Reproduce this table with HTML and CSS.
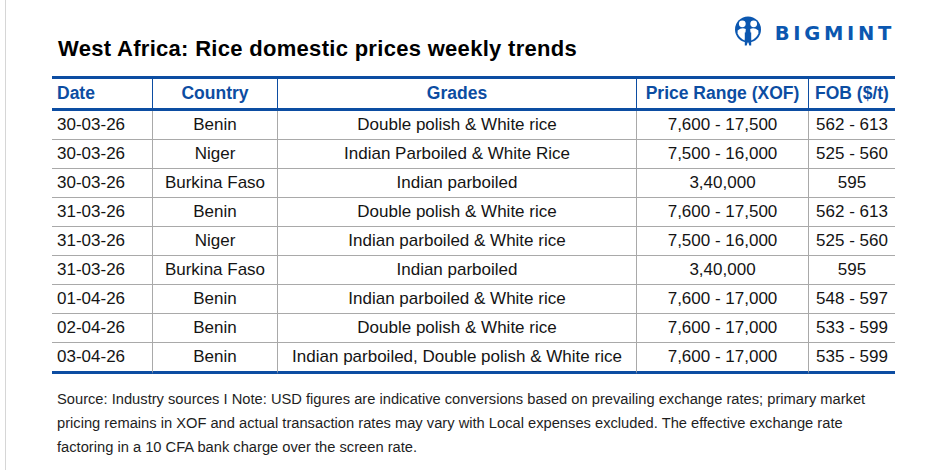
FILE: index.html
```html
<!DOCTYPE html>
<html lang="en">
<head>
<meta charset="utf-8">
<title>West Africa: Rice domestic prices weekly trends</title>
<link rel="stylesheet" href="styles.css">
</head>
<body>
<div class="page">
  <div class="top">
    <h1 class="title">West Africa: Rice domestic prices weekly trends</h1>
    <div class="logo">
      <svg class="logo-icon" width="26" height="30" viewBox="0 0 26 30" aria-hidden="true">
        <circle cx="13" cy="13.5" r="13" fill="#0b57b0"/>
        <circle cx="7.3" cy="7.8" r="3.4" fill="#fff"/>
        <circle cx="18.7" cy="7.8" r="3.4" fill="#fff"/>
        <path d="M2.6 14.5 Q6.8 11 10.8 13 L9.8 24.5 Q4.6 22 2.6 17.5 Z" fill="#fff"/>
        <path d="M23.4 14.5 Q19.2 11 15.2 13 L16.2 24.5 Q21.4 22 23.4 17.5 Z" fill="#fff"/>
        <path d="M9.8 16.5 L9.8 29.5 L11.7 29.5 L13 25 L14.3 29.5 L16.2 29.5 L16.2 16.5 Z" fill="#0b57b0"/>
      </svg>
      <span class="logo-text">BIGMINT</span>
    </div>
  </div>
  <table class="prices">
    <thead>
      <tr>
        <th class="c-date">Date</th>
        <th class="c-country">Country</th>
        <th class="c-grade">Grades</th>
        <th class="c-price">Price Range (XOF)</th>
        <th class="c-fob">FOB ($/t)</th>
      </tr>
    </thead>
    <tbody>
      <tr><td>30-03-26</td><td>Benin</td><td>Double polish &amp; White rice</td><td>7,600 - 17,500</td><td>562 - 613</td></tr>
      <tr><td>30-03-26</td><td>Niger</td><td>Indian Parboiled &amp; White Rice</td><td>7,500 - 16,000</td><td>525 - 560</td></tr>
      <tr><td>30-03-26</td><td>Burkina Faso</td><td>Indian parboiled</td><td>3,40,000</td><td>595</td></tr>
      <tr><td>31-03-26</td><td>Benin</td><td>Double polish &amp; White rice</td><td>7,600 - 17,500</td><td>562 - 613</td></tr>
      <tr><td>31-03-26</td><td>Niger</td><td>Indian parboiled &amp; White rice</td><td>7,500 - 16,000</td><td>525 - 560</td></tr>
      <tr><td>31-03-26</td><td>Burkina Faso</td><td>Indian parboiled</td><td>3,40,000</td><td>595</td></tr>
      <tr><td>01-04-26</td><td>Benin</td><td>Indian parboiled &amp; White rice</td><td>7,600 - 17,000</td><td>548 - 597</td></tr>
      <tr><td>02-04-26</td><td>Benin</td><td>Double polish &amp; White rice</td><td>7,600 - 17,000</td><td>533 - 599</td></tr>
      <tr><td>03-04-26</td><td>Benin</td><td>Indian parboiled, Double polish &amp; White rice</td><td>7,600 - 17,000</td><td>535 - 599</td></tr>
    </tbody>
  </table>
  <p class="note">Source: Industry sources I Note: USD figures are indicative conversions based on prevailing exchange rates; primary market<br>pricing remains in XOF and actual transaction rates may vary with Local expenses excluded. The effective exchange rate<br>factoring in a 10 CFA bank charge over the screen rate.</p>
</div>
</body>
</html>
```
FILE: styles.css
```css
html, body {
  margin: 0;
  padding: 0;
  background: #ffffff;
}

body {
  font-family: "Liberation Sans", Arial, sans-serif;
  color: #141414;
}

.page {
  margin-left: 5px;
  border-left: 1px solid #d6d6d6;
  height: 470px;
  padding-left: 46px;
  width: 843px;
}

.top {
  display: flex;
  justify-content: space-between;
  align-items: flex-start;
  height: 76px;
}

.title {
  margin: 0;
  padding: 37px 0 0 6px;
  font-size: 22px;
  line-height: 24px;
  letter-spacing: 0.3px;
  font-weight: bold;
  color: #000000;
}

.logo {
  display: flex;
  align-items: flex-start;
  gap: 14px;
  margin-top: 16px;
}

.logo-icon {
  display: block;
}

.logo-text {
  margin-top: 6px;
  font-family: "DejaVu Sans", "Liberation Sans", sans-serif;
  font-weight: bold;
  font-size: 19.5px;
  line-height: 24px;
  letter-spacing: 3.7px;
  color: #0b57b0;
}

.prices {
  border-collapse: separate;
  border-spacing: 0;
  table-layout: fixed;
  width: 843px;
  font-size: 17px;
}

.prices th,
.prices td {
  box-sizing: border-box;
  padding: 0 4px;
  text-align: center;
  white-space: nowrap;
}

.prices th {
  height: 35px;
  border-top: 3px solid #0c4da2;
  border-bottom: 3px solid #0c4da2;
  color: #0c4da2;
  font-weight: bold;
  font-size: 17.5px;
}

.prices th + th {
  border-left: 1px solid #0c4da2;
}

.prices td {
  height: 29px;
  border-bottom: 1px solid #a9a9a9;
}

.prices td + td {
  border-left: 1px solid #a9a9a9;
}

.prices tbody tr:last-child td {
  height: 31px;
  border-bottom: 3px solid #0c4da2;
}

.prices th:first-child,
.prices td:first-child {
  text-align: left;
  padding-left: 5px;
}

.c-date { width: 100px; }
.c-country { width: 125px; }
.c-grade { width: 359px; }
.c-price { width: 172px; }
.c-fob { width: 87px; }

.note {
  margin: 13px 0 0 0;
  padding-left: 5px;
  font-size: 14.7px;
  line-height: 24px;
  color: #1e1e1e;
  white-space: nowrap;
}
```
